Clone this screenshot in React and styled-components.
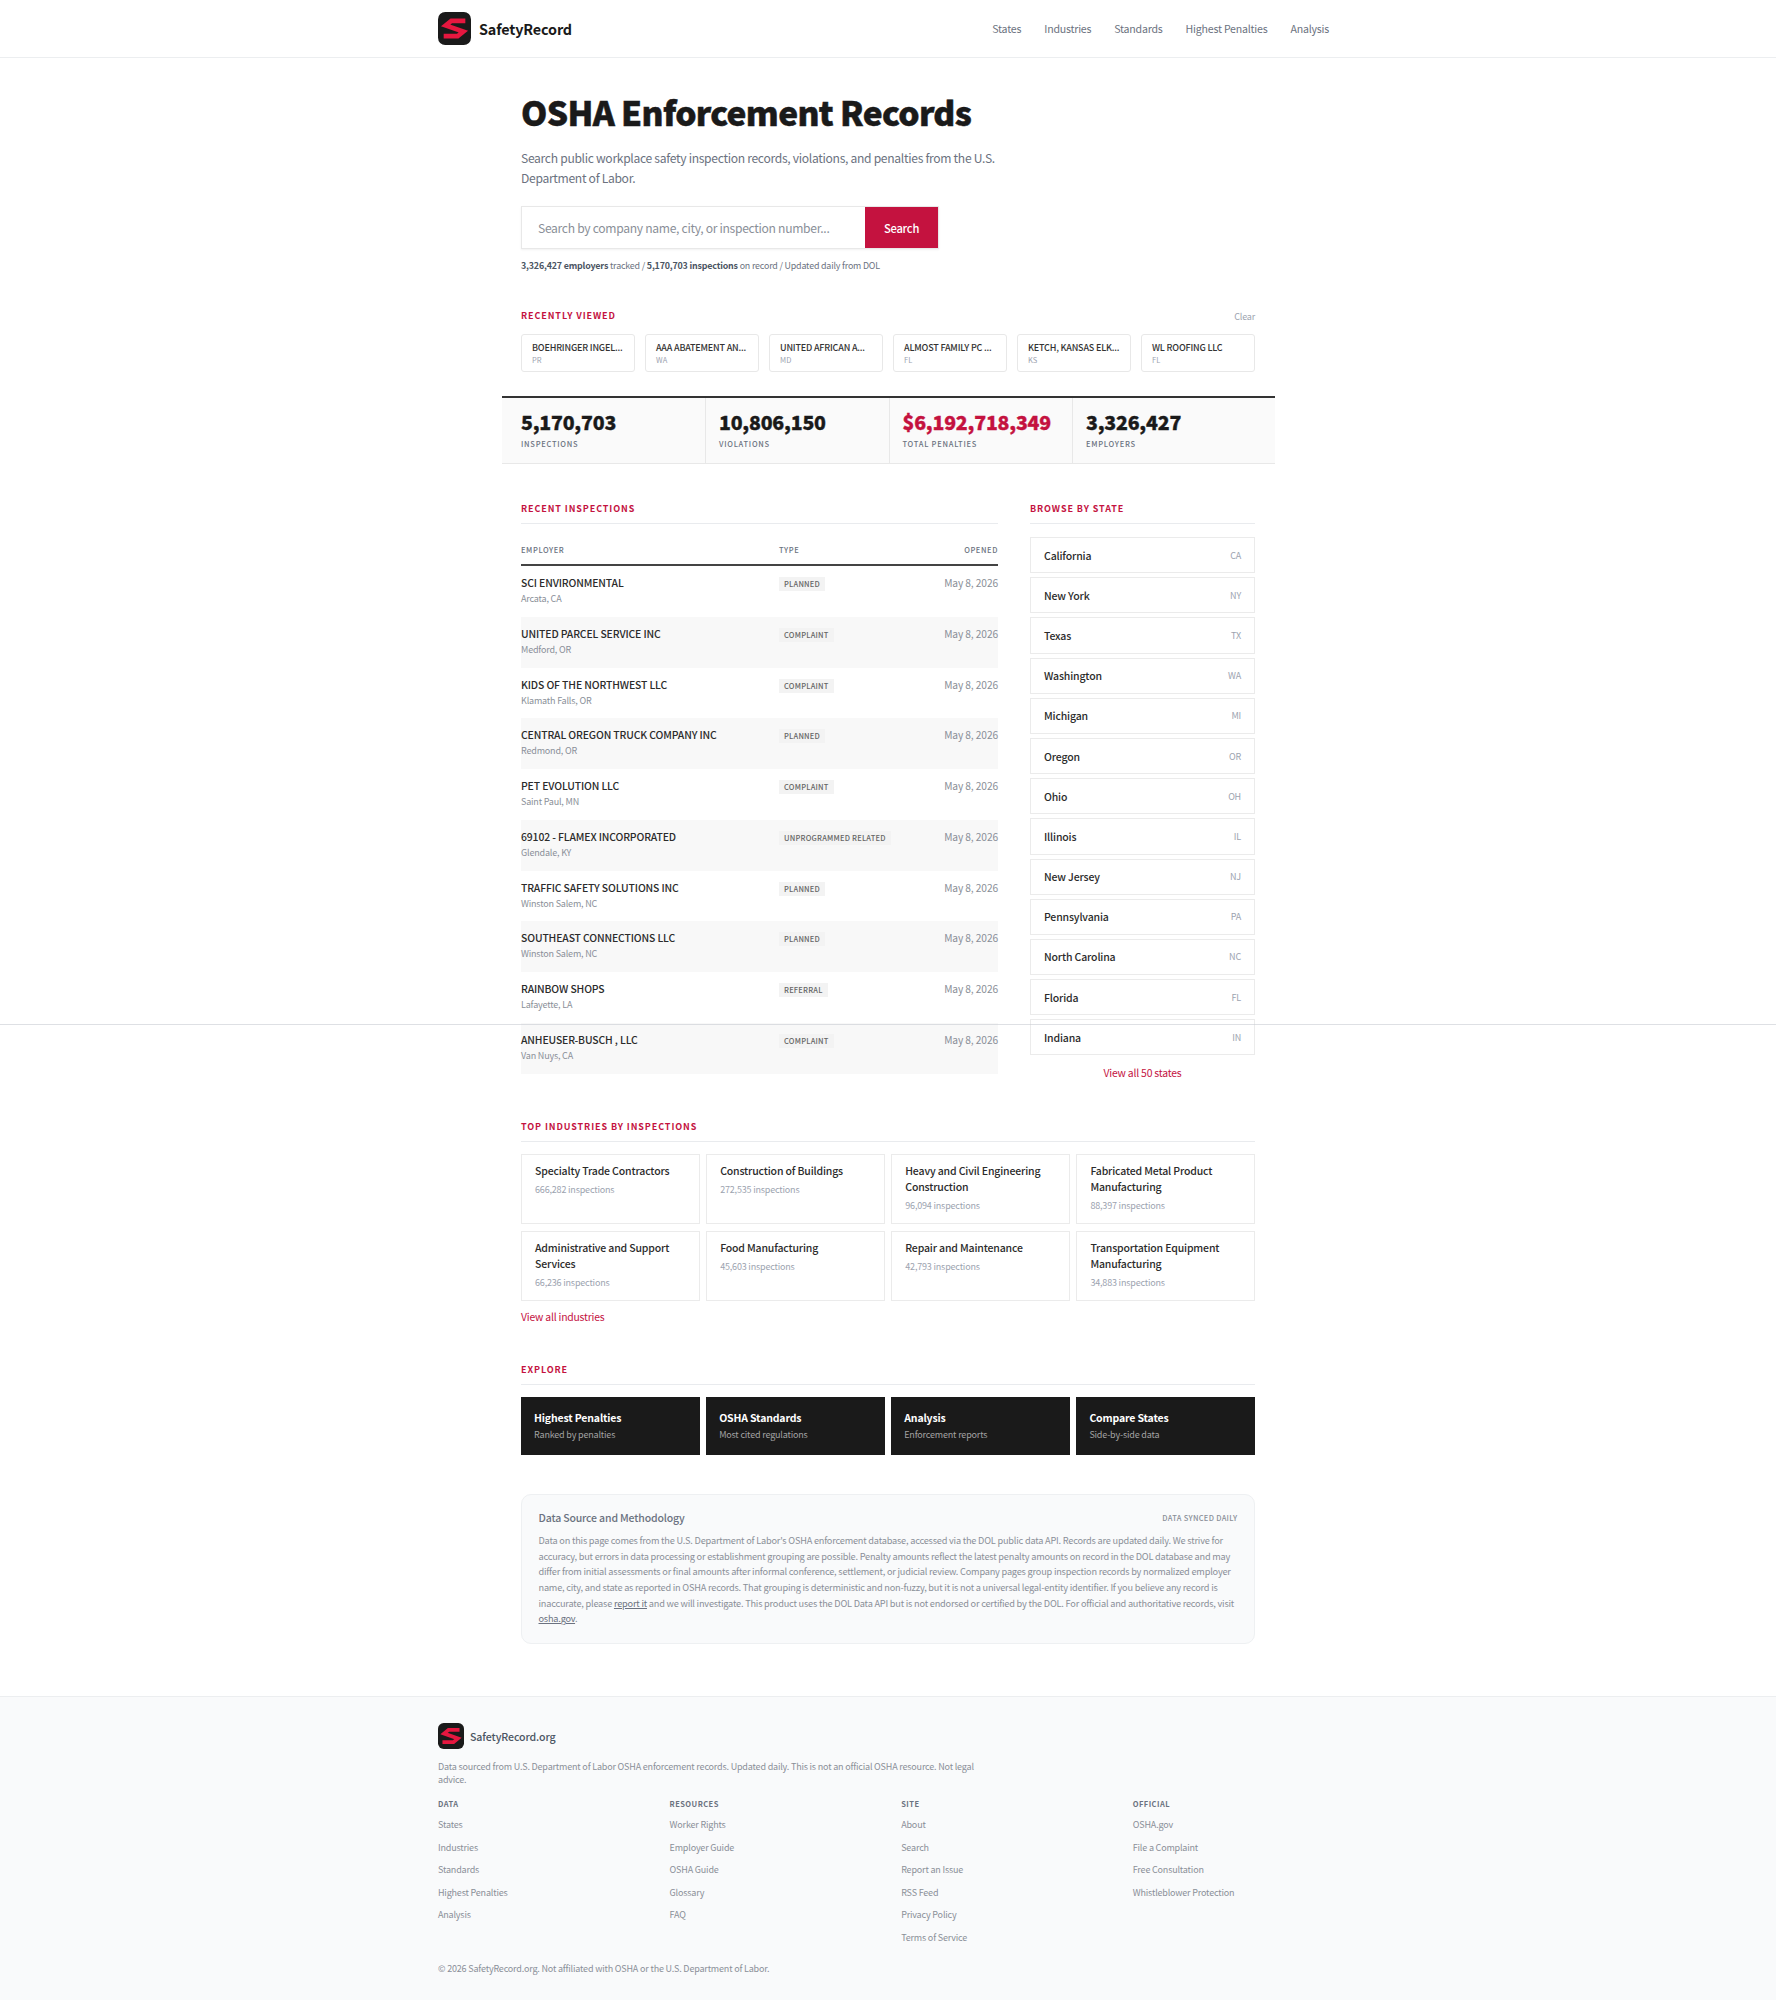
import React from 'react';
import styled, { createGlobalStyle } from 'styled-components';

const RED = '#c4123f';
const INK = '#1a1a1a';

const GlobalStyle = createGlobalStyle`
    html, body {
        margin: 0;
        padding: 0;
        background: #fff;
    }
    body {
        font-family: "Noto Sans CJK SC", "Open Sans", sans-serif;
        color: ${INK};
    }
    * {
        box-sizing: border-box;
    }
`;

const Page = styled.div`
    position: relative;
    width: 100%;
    height: 2000px;
    overflow: hidden;
`;

// thin line that runs across the whole page in the screenshot
const StrayLine = styled.div`
    position: absolute;
    top: 1024px;
    left: 0;
    right: 0;
    height: 1px;
    background: rgba(200, 204, 210, 0.6);
`;

const Header = styled.header`
    height: 58px;
    border-bottom: 1px solid #eceef0;
    display: flex;
    justify-content: center;
`;

const HeaderInner = styled.div`
    width: 900px;
    padding-right: 9px;
    display: flex;
    align-items: center;
    justify-content: space-between;
`;

const Brand = styled.div`
    display: flex;
    align-items: center;
    gap: ${p => p.$gap}px;
    font-size: ${p => p.$size}px;
    font-weight: ${p => p.$weight};
    letter-spacing: -0.01em;
    color: ${p => p.$color};
`;

const Nav = styled.nav`
    display: flex;
    gap: 23px;
`;

const NavLink = styled.a`
    font-size: 10.6px;
    letter-spacing: -0.02em;
    color: #6b7280;
`;

const Main = styled.main`
    width: 734px;
    margin: 0 auto;
`;

const Hero = styled.section`
    padding-top: 32px;
`;

const Title = styled.h1`
    margin: 0;
    font-size: 33.5px;
    line-height: 44px;
    font-weight: 900;
    letter-spacing: -0.02em;
    -webkit-text-stroke: 0.5px ${INK};
`;

const Lead = styled.p`
    margin: 14px 0 0;
    width: 490px;
    font-size: 12.1px;
    line-height: 19.5px;
    letter-spacing: -0.025em;
    color: #6b7280;
`;

const SearchBar = styled.div`
    display: flex;
    width: 418px;
    height: 43px;
    margin-top: 19px;
    border: 1px solid #e8e8e8;
    box-shadow: 0 1px 2px rgba(0, 0, 0, 0.06);
`;

const SearchInput = styled.div`
    flex: 1;
    padding-left: 16px;
    display: flex;
    align-items: center;
    font-size: 12.1px;
    letter-spacing: -0.025em;
    color: #8a8f98;
`;

const SearchButton = styled.div`
    width: 73px;
    background: ${RED};
    color: #fff;
    font-size: 11.2px;
    font-weight: 500;
    letter-spacing: -0.02em;
    display: flex;
    align-items: center;
    justify-content: center;
`;

const Meta = styled.p`
    margin: 10px 0 0;
    font-size: 8.9px;
    line-height: 14px;
    letter-spacing: -0.02em;
    color: #6b7280;

    strong {
        font-weight: 700;
        color: #4b5563;
    }
`;

const LabelRow = styled.div`
    display: flex;
    justify-content: space-between;
    align-items: center;
`;

const SectionLabel = styled.h2`
    margin: 0;
    font-size: 9px;
    line-height: 14px;
    font-weight: 700;
    letter-spacing: 0.1em;
    text-transform: uppercase;
    color: ${RED};
`;

const RuledLabel = styled(SectionLabel)`
    padding-bottom: 7px;
    border-bottom: 1px solid #e9ebee;
`;

const Clear = styled.span`
    font-size: 9px;
    letter-spacing: -0.02em;
    color: #9ca3af;
`;

const Recent = styled.section`
    margin-top: 36px;
`;

const RecentGrid = styled.div`
    display: grid;
    grid-template-columns: repeat(6, 1fr);
    gap: 10px;
    margin-top: 11px;
`;

const RecentCard = styled.div`
    height: 38px;
    padding: 6px 10px;
    border: 1px solid #e8e8e8;
    border-radius: 3px;
    min-width: 0;
`;

const RecentName = styled.div`
    font-size: 9px;
    line-height: 13px;
    font-weight: 500;
    letter-spacing: -0.02em;
    color: #333;
    white-space: nowrap;
`;

const RecentState = styled.div`
    font-size: 7.5px;
    line-height: 11px;
    letter-spacing: 0.01em;
    color: #9ca3af;
`;

const StatsBand = styled.section`
    width: 773px;
    margin: 24px 0 0 -19px;
    height: 68px;
    display: grid;
    grid-template-columns: 203px 183.5px 183.5px 1fr;
    background: #fafafa;
    border-top: 2px solid #333;
    border-bottom: 1px solid #e8e8e8;
`;

const StatCell = styled.div`
    padding: 11px 0 0 ${p => p.$pad}px;
    border-left: ${p => (p.$first ? 'none' : '1px solid #e8e8e8')};
`;

const StatValue = styled.div`
    font-size: 19.5px;
    line-height: 26px;
    font-weight: 900;
    letter-spacing: -0.01em;
    -webkit-text-stroke: 0.35px ${p => (p.$red ? RED : INK)};
    color: ${p => (p.$red ? RED : INK)};
`;

const StatLabel = styled.div`
    margin-top: 3px;
    font-size: 7.5px;
    line-height: 11px;
    font-weight: 500;
    letter-spacing: 0.1em;
    text-transform: uppercase;
    color: #6b7280;
`;

const Columns = styled.div`
    display: grid;
    grid-template-columns: 477px 225px;
    justify-content: space-between;
    margin-top: 38px;
`;

const Table = styled.div`
    margin-top: 14px;
`;

const TableHead = styled.div`
    display: grid;
    grid-template-columns: 258px 1fr auto;
    height: 28px;
    border-bottom: 2px solid #444;
    font-size: 7.5px;
    line-height: 23px;
    font-weight: 500;
    letter-spacing: 0.08em;
    text-transform: uppercase;
    color: #6b7280;
`;

const Row = styled.div`
    display: grid;
    grid-template-columns: 258px 1fr auto;
    height: 50.75px;
    padding-top: 9px;
    background: ${p => (p.$alt ? '#f8f8f8' : '#fff')};
`;

const Employer = styled.div`
    font-size: 10.4px;
    line-height: 16px;
    font-weight: 500;
    letter-spacing: -0.012em;
    color: #2b2b2b;
`;

const Place = styled.div`
    font-size: 9px;
    line-height: 15px;
    letter-spacing: -0.02em;
    color: #8a8f98;
`;

const Badge = styled.span`
    justify-self: start;
    align-self: start;
    height: 14px;
    padding: 0 5px;
    margin-top: 2px;
    background: #f3f3f3;
    font-size: 7.5px;
    line-height: 14px;
    font-weight: 500;
    letter-spacing: 0.03em;
    text-transform: uppercase;
    color: #666;
`;

const Opened = styled.div`
    font-size: 10.2px;
    line-height: 16px;
    letter-spacing: -0.01em;
    color: #8a8f98;
`;

const StateList = styled.div`
    display: flex;
    flex-direction: column;
    gap: 4px;
    margin-top: 13px;
`;

const StateCard = styled.div`
    height: 36.2px;
    padding: 0 13px;
    border: 1px solid #ebebeb;
    display: flex;
    align-items: center;
    justify-content: space-between;
`;

const StateName = styled.span`
    font-size: 10.5px;
    font-weight: 500;
    letter-spacing: -0.015em;
    color: #2b2b2b;
`;

const StateCode = styled.span`
    font-size: 9px;
    letter-spacing: -0.02em;
    color: #9ca3af;
`;

const ViewAll = styled.a`
    display: block;
    font-size: 10.4px;
    line-height: 16px;
    letter-spacing: -0.02em;
    color: ${RED};
    text-align: ${p => p.$align || 'left'};
    margin-top: ${p => p.$top}px;
`;

const Block = styled.section`
    margin-top: ${p => p.$top}px;
`;

const CardGrid = styled.div`
    display: grid;
    grid-template-columns: repeat(4, 1fr);
    gap: 6.5px;
    margin-top: ${p => p.$top}px;
`;

const IndustryCard = styled.div`
    height: 70px;
    padding: 8px 13px 0;
    border: 1px solid #ebebeb;
`;

const IndustryName = styled.div`
    font-size: 10.5px;
    line-height: 16px;
    font-weight: 500;
    letter-spacing: -0.015em;
    color: #2b2b2b;
`;

const IndustryCount = styled.div`
    margin-top: 4px;
    font-size: 9px;
    line-height: 14px;
    letter-spacing: -0.02em;
    color: #9ca3af;
`;

const ExploreCard = styled.div`
    height: 58px;
    padding: 12px 13px 0;
    background: ${INK};
`;

const ExploreTitle = styled.div`
    font-size: 10.5px;
    line-height: 17px;
    font-weight: 700;
    letter-spacing: -0.015em;
    color: #fff;
`;

const ExploreSub = styled.div`
    font-size: 9px;
    line-height: 17px;
    letter-spacing: -0.02em;
    color: #a3a3a3;
`;

const Method = styled.section`
    height: 150px;
    margin-top: 39px;
    padding: 15px 16.5px;
    background: #f9fafb;
    border: 1px solid #eef0f2;
    border-radius: 10px;
`;

const MethodHead = styled.div`
    display: flex;
    justify-content: space-between;
    align-items: center;
    height: 16px;
`;

const MethodTitle = styled.h3`
    margin: 0;
    font-size: 10.5px;
    font-weight: 500;
    letter-spacing: -0.015em;
    color: #6b7280;
`;

const MethodTag = styled.span`
    font-size: 7.5px;
    font-weight: 500;
    letter-spacing: 0.04em;
    text-transform: uppercase;
    color: #8a8f98;
`;

const MethodText = styled.p`
    margin: 7px 0 0;
    font-size: 9.2px;
    line-height: 15.7px;
    letter-spacing: -0.022em;
    color: #8a8f98;

    a {
        color: #6b7280;
        text-decoration: underline;
    }
`;

const Footer = styled.footer`
    position: absolute;
    top: 1696px;
    left: 0;
    right: 0;
    bottom: 0;
    padding: 26px 0 0 438px;
    background: #f9fafb;
    border-top: 1px solid #eceef0;
`;

const FooterText = styled.p`
    width: 550px;
    margin: 11px 0 0;
    font-size: 9px;
    line-height: 13px;
    letter-spacing: -0.02em;
    color: #8a8f98;
`;

const FooterGrid = styled.div`
    display: grid;
    grid-template-columns: repeat(4, 231.6px);
    margin-top: 12px;
`;

const FooterHead = styled.div`
    font-size: 7.5px;
    line-height: 12px;
    font-weight: 700;
    letter-spacing: 0.06em;
    text-transform: uppercase;
    color: #6b7280;
    margin-bottom: 4px;
`;

const FooterLink = styled.a`
    display: block;
    font-size: 9px;
    line-height: 22.5px;
    letter-spacing: -0.02em;
    color: #8a8f98;
`;

const Copyright = styled.p`
    position: absolute;
    top: 265px;
    left: 438px;
    margin: 0;
    font-size: 9px;
    line-height: 14px;
    letter-spacing: -0.02em;
    color: #8a8f98;
`;

const Logo = ({ size }) => (
    <svg width={size} height={size} viewBox="0 0 32 32">
        <rect width="32" height="32" rx="7" fill="#1a1a1a" />
        <path d="M26.5 8.5H13L7.5 13L24.5 19L19 23.5H5.5" fill="none" stroke="#e6173f" strokeWidth="4.6" />
    </svg>
);

const NAV = ['States', 'Industries', 'Standards', 'Highest Penalties', 'Analysis'];

// names are cut in the source page too, so they are kept as shown
const RECENT = [
    ['BOEHRINGER INGEL...', 'PR'],
    ['AAA ABATEMENT AN...', 'WA'],
    ['UNITED AFRICAN A...', 'MD'],
    ['ALMOST FAMILY PC ...', 'FL'],
    ['KETCH, KANSAS ELK...', 'KS'],
    ['WL ROOFING LLC', 'FL'],
];

const STATS = [
    { value: '5,170,703', label: 'Inspections', pad: 19 },
    { value: '10,806,150', label: 'Violations', pad: 13 },
    { value: '$6,192,718,349', label: 'Total Penalties', pad: 13, red: true },
    { value: '3,326,427', label: 'Employers', pad: 13 },
];

const INSPECTIONS = [
    ['SCI ENVIRONMENTAL', 'Arcata, CA', 'Planned'],
    ['UNITED PARCEL SERVICE INC', 'Medford, OR', 'Complaint'],
    ['KIDS OF THE NORTHWEST LLC', 'Klamath Falls, OR', 'Complaint'],
    ['CENTRAL OREGON TRUCK COMPANY INC', 'Redmond, OR', 'Planned'],
    ['PET EVOLUTION LLC', 'Saint Paul, MN', 'Complaint'],
    ['69102 - FLAMEX INCORPORATED', 'Glendale, KY', 'Unprogrammed Related'],
    ['TRAFFIC SAFETY SOLUTIONS INC', 'Winston Salem, NC', 'Planned'],
    ['SOUTHEAST CONNECTIONS LLC', 'Winston Salem, NC', 'Planned'],
    ['RAINBOW SHOPS', 'Lafayette, LA', 'Referral'],
    ['ANHEUSER-BUSCH , LLC', 'Van Nuys, CA', 'Complaint'],
];

const STATES = [
    ['California', 'CA'], ['New York', 'NY'], ['Texas', 'TX'], ['Washington', 'WA'],
    ['Michigan', 'MI'], ['Oregon', 'OR'], ['Ohio', 'OH'], ['Illinois', 'IL'],
    ['New Jersey', 'NJ'], ['Pennsylvania', 'PA'], ['North Carolina', 'NC'],
    ['Florida', 'FL'], ['Indiana', 'IN'],
];

const INDUSTRIES = [
    ['Specialty Trade Contractors', '666,282'],
    ['Construction of Buildings', '272,535'],
    ['Heavy and Civil Engineering Construction', '96,094'],
    ['Fabricated Metal Product Manufacturing', '88,397'],
    ['Administrative and Support Services', '66,236'],
    ['Food Manufacturing', '45,603'],
    ['Repair and Maintenance', '42,793'],
    ['Transportation Equipment Manufacturing', '34,883'],
];

const EXPLORE = [
    ['Highest Penalties', 'Ranked by penalties'],
    ['OSHA Standards', 'Most cited regulations'],
    ['Analysis', 'Enforcement reports'],
    ['Compare States', 'Side-by-side data'],
];

const FOOTER = [
    ['Data', ['States', 'Industries', 'Standards', 'Highest Penalties', 'Analysis']],
    ['Resources', ['Worker Rights', 'Employer Guide', 'OSHA Guide', 'Glossary', 'FAQ']],
    ['Site', ['About', 'Search', 'Report an Issue', 'RSS Feed', 'Privacy Policy', 'Terms of Service']],
    ['Official', ['OSHA.gov', 'File a Complaint', 'Free Consultation', 'Whistleblower Protection']],
];

const App = () => (
    <Page>
        <GlobalStyle />
        <Header>
            <HeaderInner>
                <Brand $gap={8} $size={14.4} $weight={700} $color="#1a1a1a">
                    <Logo size={33} />
                    SafetyRecord
                </Brand>
                <Nav>
                    {NAV.map(item => <NavLink key={item}>{item}</NavLink>)}
                </Nav>
            </HeaderInner>
        </Header>

        <Main>
            <Hero>
                <Title>OSHA Enforcement Records</Title>
                <Lead>Search public workplace safety inspection records, violations, and penalties from the U.S. Department of Labor.</Lead>
                <SearchBar>
                    <SearchInput>Search by company name, city, or inspection number...</SearchInput>
                    <SearchButton>Search</SearchButton>
                </SearchBar>
                <Meta><strong>3,326,427 employers</strong> tracked / <strong>5,170,703 inspections</strong> on record / Updated daily from DOL</Meta>
            </Hero>

            <Recent>
                <LabelRow>
                    <SectionLabel>Recently Viewed</SectionLabel>
                    <Clear>Clear</Clear>
                </LabelRow>
                <RecentGrid>
                    {RECENT.map(([name, state]) => (
                        <RecentCard key={name}>
                            <RecentName>{name}</RecentName>
                            <RecentState>{state}</RecentState>
                        </RecentCard>
                    ))}
                </RecentGrid>
            </Recent>

            <StatsBand>
                {STATS.map((stat, i) => (
                    <StatCell key={stat.label} $pad={stat.pad} $first={i === 0}>
                        <StatValue $red={stat.red}>{stat.value}</StatValue>
                        <StatLabel>{stat.label}</StatLabel>
                    </StatCell>
                ))}
            </StatsBand>

            <Columns>
                <div>
                    <RuledLabel>Recent Inspections</RuledLabel>
                    <Table>
                        <TableHead>
                            <span>Employer</span>
                            <span>Type</span>
                            <span>Opened</span>
                        </TableHead>
                        {INSPECTIONS.map(([name, place, type], i) => (
                            <Row key={name} $alt={i % 2 === 1}>
                                <div>
                                    <Employer>{name}</Employer>
                                    <Place>{place}</Place>
                                </div>
                                <Badge>{type}</Badge>
                                <Opened>May 8, 2026</Opened>
                            </Row>
                        ))}
                    </Table>
                </div>
                <div>
                    <RuledLabel>Browse by State</RuledLabel>
                    <StateList>
                        {STATES.map(([name, code]) => (
                            <StateCard key={code}>
                                <StateName>{name}</StateName>
                                <StateCode>{code}</StateCode>
                            </StateCard>
                        ))}
                    </StateList>
                    <ViewAll $align="center" $top={10}>View all 50 states</ViewAll>
                </div>
            </Columns>

            <Block $top={39}>
                <RuledLabel>Top Industries by Inspections</RuledLabel>
                <CardGrid $top={12}>
                    {INDUSTRIES.map(([name, count]) => (
                        <IndustryCard key={name}>
                            <IndustryName>{name}</IndustryName>
                            <IndustryCount>{count} inspections</IndustryCount>
                        </IndustryCard>
                    ))}
                </CardGrid>
                <ViewAll $top={8}>View all industries</ViewAll>
            </Block>

            <Block $top={38}>
                <RuledLabel>Explore</RuledLabel>
                <CardGrid $top={12}>
                    {EXPLORE.map(([title, sub]) => (
                        <ExploreCard key={title}>
                            <ExploreTitle>{title}</ExploreTitle>
                            <ExploreSub>{sub}</ExploreSub>
                        </ExploreCard>
                    ))}
                </CardGrid>
            </Block>

            <Method>
                <MethodHead>
                    <MethodTitle>Data Source and Methodology</MethodTitle>
                    <MethodTag>Data synced daily</MethodTag>
                </MethodHead>
                <MethodText>
                    Data on this page comes from the U.S. Department of Labor's OSHA enforcement database, accessed via the DOL public data API. Records are updated daily. We strive for accuracy, but errors in data processing or establishment grouping are possible. Penalty amounts reflect the latest penalty amounts on record in the DOL database and may differ from initial assessments or final amounts after informal conference, settlement, or judicial review. Company pages group inspection records by normalized employer name, city, and state as reported in OSHA records. That grouping is deterministic and non-fuzzy, but it is not a universal legal-entity identifier. If you believe any record is inaccurate, please <a>report it</a> and we will investigate. This product uses the DOL Data API but is not endorsed or certified by the DOL. For official and authoritative records, visit <a>osha.gov</a>.
                </MethodText>
            </Method>
        </Main>

        <Footer>
            <Brand $gap={6} $size={10.6} $weight={500} $color="#4b5563">
                <Logo size={26} />
                SafetyRecord.org
            </Brand>
            <FooterText>Data sourced from U.S. Department of Labor OSHA enforcement records. Updated daily. This is not an official OSHA resource. Not legal advice.</FooterText>
            <FooterGrid>
                {FOOTER.map(([head, links]) => (
                    <div key={head}>
                        <FooterHead>{head}</FooterHead>
                        {links.map(link => <FooterLink key={link}>{link}</FooterLink>)}
                    </div>
                ))}
            </FooterGrid>
            <Copyright>© 2026 SafetyRecord.org. Not affiliated with OSHA or the U.S. Department of Labor.</Copyright>
        </Footer>
        <StrayLine />
    </Page>
);

export default App;
